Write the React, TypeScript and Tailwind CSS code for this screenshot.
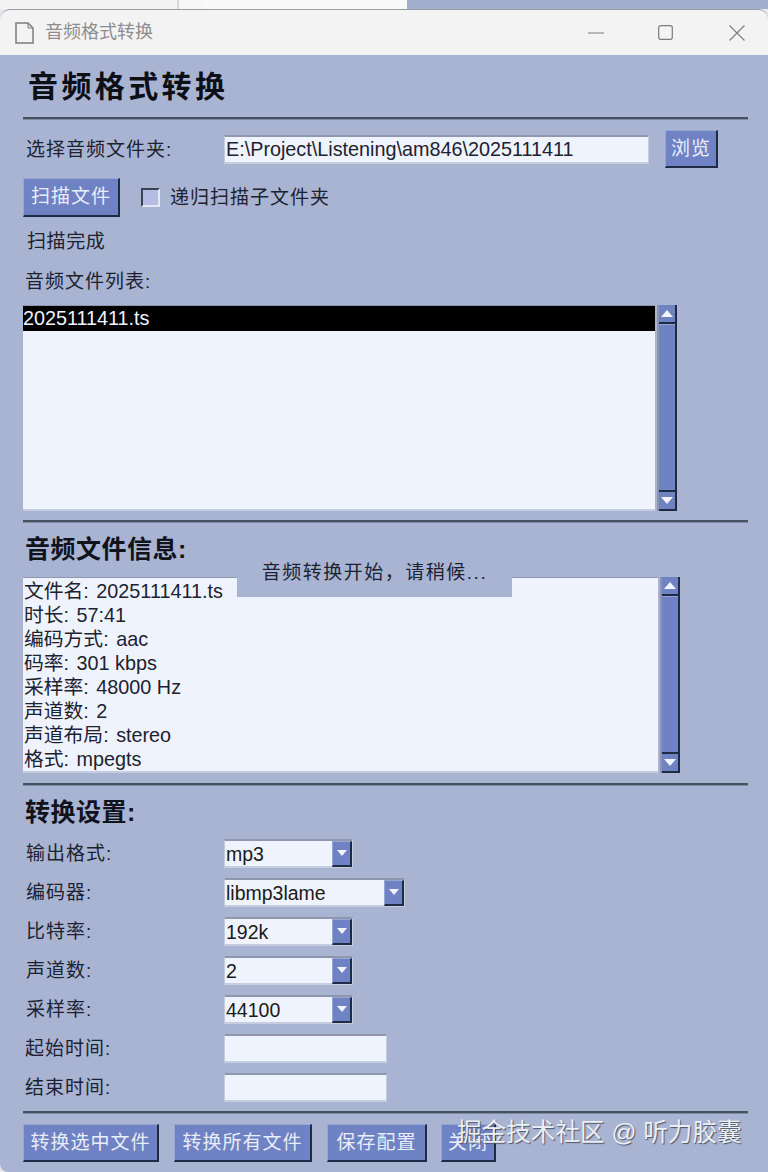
import React from "react";

const bevel = "border-t border-l border-t-[#98a6d6] border-l-[#98a6d6] border-b-2 border-r-2 border-b-[#1f2a45] border-r-[#1f2a45]";
const field = "border-t-2 border-t-[#8e97ad] border-l border-l-[#c3cbe0] border-b-2 border-b-[#c6cde0] border-r border-r-[#c6cde0] bg-[#eff3fd]";

const Divider = ({ className = "" }: { className?: string }) => (
  <div className={`h-[2px] w-[725px] bg-[#465161] shadow-[0_1px_0_#7f8aa3] ${className}`} />
);

const Button = ({ label, className = "" }: { label: string; className?: string }) => (
  <button className={`flex items-center justify-center bg-[#6f82c4] pt-[1px] text-[19px] tracking-[1px] text-[#e9eefb] ${bevel} ${className}`}>
    {label}
  </button>
);

const Arrow = ({ down }: { down?: boolean }) => (
  <svg width="12" height="7" viewBox="0 0 12 7">
    <path d={down ? "M0 0H12L6 7Z" : "M0 7H12L6 0Z"} fill="#f1f4fd" />
  </svg>
);

const Scrollbar = ({ className = "" }: { className?: string }) => (
  <div className={`flex w-[20px] flex-col border-l-2 border-l-[#8b94a9] border-r-2 border-r-[#1f2a45] bg-[#6f82c4] ${className}`}>
    <div className="flex h-[19px] shrink-0 items-center justify-center border-b-2 border-b-[#1f2a45]">
      <Arrow />
    </div>
    <div className="flex-1 border-t border-t-[#98a6d6]" />
    <div className="flex h-[21px] shrink-0 items-center justify-center border-t-2 border-t-[#1f2a45] border-b-2 border-b-[#1f2a45]">
      <Arrow down />
    </div>
  </div>
);

const Combo = ({ value, wide }: { value: string; wide?: boolean }) => (
  <div className={`flex h-[29px] items-center justify-between pl-[1px] ${field} ${wide ? "w-[181px]" : "w-[129px]"}`}>
    <span className="pt-[2px] text-[19.5px] text-[#1a1a1a]">{value}</span>
    <div className={`flex h-[26px] w-[20px] items-center justify-center bg-[#6f82c4] ${bevel}`}>
      <svg width="10" height="6" viewBox="0 0 10 6">
        <path d="M0 0H10L5 6Z" fill="#f1f4fd" />
      </svg>
    </div>
  </div>
);

const settings = [
  { label: "输出格式:", value: "mp3" },
  { label: "编码器:", value: "libmp3lame", wide: true },
  { label: "比特率:", value: "192k" },
  { label: "声道数:", value: "2" },
  { label: "采样率:", value: "44100" },
];

const info = [
  ["文件名", "2025111411.ts"],
  ["时长", "57:41"],
  ["编码方式", "aac"],
  ["码率", "301 kbps"],
  ["采样率", "48000 Hz"],
  ["声道数", "2"],
  ["声道布局", "stereo"],
  ["格式", "mpegts"],
];

export default function App() {
  return (
    <div className="relative flex h-[1172px] w-[768px] flex-col overflow-hidden bg-[#e9e9ec] font-['Liberation_Sans','Noto_Sans_CJK_SC',sans-serif] text-[#1c2230]">
      {/* desktop behind the window */}
      <div className="flex h-[9px] shrink-0">
        <div className="w-[177px] bg-[#f4f4f4]" />
        <div className="w-[2px] bg-[#d8d8d8]" />
        <div className="w-[24px] bg-[#f6f6f6]" />
        <div className="w-[204px] bg-[#f9f9f9]" />
        <div className="flex-1 bg-[#a3aecd]" />
      </div>

      <div className="flex flex-1 flex-col overflow-hidden rounded-t-[10px] rounded-bl-[8px] border-t border-t-[#9a9ca3] bg-[#a9b4d3]">
        {/* title bar */}
        <div className="flex h-[45px] shrink-0 items-center bg-[#f3f3f3] pl-[15px]">
          <svg width="19" height="22" viewBox="0 0 19 22" fill="none" stroke="#7c7c7c" strokeWidth="1.5">
            <path d="M1 1H13L18 6V21H1Z" />
            <path d="M13 1V6H18" strokeWidth="1" />
          </svg>
          <span className="ml-[11px] text-[18px] text-[#8d8d8d]">音频格式转换</span>
          <div className="ml-auto flex items-center">
            <svg width="16" height="2" viewBox="0 0 16 2" className="mr-[54px]">
              <path d="M0 1H16" stroke="#7c7c7c" strokeWidth="1" />
            </svg>
            <svg width="15" height="15" viewBox="0 0 15 15" className="mr-[56px]" fill="none">
              <rect x="0.7" y="0.7" width="13.6" height="13.6" rx="2" stroke="#7c7c7c" strokeWidth="1.2" />
            </svg>
            <svg width="16" height="16" viewBox="0 0 16 16" className="mr-[23px]" fill="none">
              <path d="M0.5 0.5L15.5 15.5M15.5 0.5L0.5 15.5" stroke="#7c7c7c" strokeWidth="1.1" />
            </svg>
          </div>
        </div>

        <div className="relative flex flex-1 flex-col pl-[23px]">
          <div className="flex h-[62px] items-center pl-[5px] pt-[2px] text-[30px] font-bold leading-none tracking-[3.4px] text-[#0d0f16]">
            音频格式转换
          </div>
          <Divider />

          <div className="mt-[11px] flex h-[38px] items-center text-[19px]">
            <span className="w-[201px] pl-[3px] pt-[2px] tracking-[1px]">选择音频文件夹:</span>
            <div className={`flex h-[29px] w-[425px] items-center pl-[1px] pt-[2px] text-[19.8px] ${field}`}>
              E:\Project\Listening\am846\2025111411
            </div>
            <Button label="浏览" className="ml-[16px] h-[38px] w-[53px]" />
          </div>

          <div className="mt-[10px] flex h-[39px] items-center text-[19px]">
            <Button label="扫描文件" className="h-[39px] w-[97px]" />
            <div className="ml-[21px] h-[19px] w-[19px] border-t-2 border-l-2 border-t-[#3a4258] border-l-[#3a4258] border-b-2 border-r-2 border-b-[#e4e8f5] border-r-[#e4e8f5] bg-[#b4bce4]" />
            <span className="ml-[10px] pt-[2px] tracking-[1px]">递归扫描子文件夹</span>
          </div>

          <div className="mt-[12px] h-[24px] pl-[4px] pt-[1px] text-[19px] leading-[24px] tracking-[0.6px]">扫描完成</div>
          <div className="mt-[16px] h-[24px] pl-[2px] pt-[1px] text-[19px] leading-[24px] tracking-[1px]">音频文件列表:</div>

          <div className="mt-[12px] flex h-[206px]">
            <div className="w-[632px] border-t border-t-[#8e97ad] border-b-2 border-b-[#c6cde0] bg-[#eff3fd]">
              <div className="flex h-[25px] items-center bg-black text-[19.8px] text-[#f1f4fd]">2025111411.ts</div>
            </div>
            <Scrollbar className="ml-[2px]" />
          </div>

          <Divider className="mt-[9px]" />
          <div className="mt-[14px] h-[26px] pl-[2px] text-[25px] font-bold leading-[26px] tracking-[0.5px] text-[#10131c]">音频文件信息:</div>

          <div className="mt-[15px] flex h-[196px]">
            <div className="w-[635px] overflow-hidden border-t border-t-[#8e97ad] border-b-2 border-b-[#c6cde0] bg-[#eff3fd] pl-[1px] pt-[1px] text-[19.8px] leading-[24px]">
              {info.map(([key, value]) => (
                <div key={key}>
                  <span className="mr-[2px]">{key}:</span> {value}
                </div>
              ))}
            </div>
            <Scrollbar className="ml-[2px]" />
          </div>

          <Divider className="mt-[10px]" />
          <div className="mt-[14px] h-[26px] pl-[2px] text-[25px] font-bold leading-[26px] tracking-[0.5px] text-[#10131c]">转换设置:</div>

          <div className="mt-[14px] flex flex-col gap-[10px] text-[19px]">
            {settings.map((s) => (
              <div key={s.label} className="flex h-[29px] items-center">
                <span className="w-[201px] pl-[3px] pt-[1px] tracking-[1px]">{s.label}</span>
                <Combo value={s.value} wide={s.wide} />
              </div>
            ))}
            {["起始时间:", "结束时间:"].map((label) => (
              <div key={label} className="flex h-[29px] items-center">
                <span className="w-[201px] pl-[2px] pt-[1px] tracking-[1px]">{label}</span>
                <div className={`h-[29px] w-[163px] ${field}`} />
              </div>
            ))}
          </div>

          <Divider className="mt-[9px]" />
          <div className="mt-[11px] flex gap-[15px]">
            <Button label="转换选中文件" className="h-[38px] w-[136px]" />
            <Button label="转换所有文件" className="h-[38px] w-[138px]" />
            <Button label="保存配置" className="h-[38px] w-[100px]" />
            <Button label="关闭" className="-ml-[1px] h-[38px] w-[55px]" />
          </div>

          {/* status popup over the info box */}
          <div className="absolute left-[237px] top-[495px] flex h-[47px] w-[275px] items-end justify-center bg-[#a9b4d3] pb-[15px] text-[19px] leading-none tracking-[1.5px] text-[#1c2230]">
            音频转换开始，请稍候...
          </div>

          {/* watermark */}
          <div className="absolute left-[457px] top-[1063px] text-[24.6px] leading-[30px] text-[#eceff5] [text-shadow:1px_1px_1px_#4c5465]">
            掘金技术社区 @ 听力胶囊
          </div>
        </div>
      </div>
    </div>
  );
}
